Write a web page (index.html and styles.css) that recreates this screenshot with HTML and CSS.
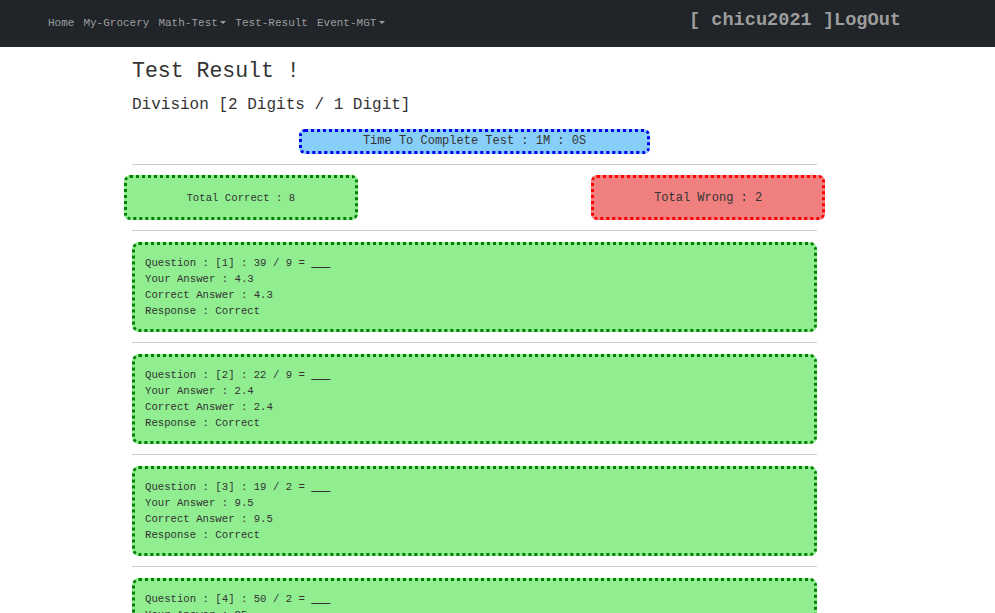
FILE: index.html
```html
<!DOCTYPE html>
<html>
<head>
<meta charset="utf-8">
<title>Test Result</title>
<link rel="stylesheet" href="styles.css">
</head>
<body>
<nav class="navbar">
  <ul class="nav-links">
    <li><a href="#">Home</a></li>
    <li><a href="#">My-Grocery</a></li>
    <li><a href="#" class="dropdown">Math-Test</a></li>
    <li><a href="#">Test-Result</a></li>
    <li><a href="#" class="dropdown">Event-MGT</a></li>
  </ul>
  <div class="user">[ chicu2021 ]<a href="#">LogOut</a></div>
</nav>

<main class="container">
  <h1 class="title">Test Result !</h1>
  <h2 class="subtitle">Division [2 Digits / 1 Digit]</h2>

  <div class="time-wrap">
    <div class="time-box">Time To Complete Test : 1M : 0S</div>
  </div>
  <hr class="sep">

  <div class="totals">
    <div class="total total-correct">Total Correct : 8</div>
    <div></div>
    <div class="total total-wrong">Total Wrong : 2</div>
  </div>
  <hr class="sep">

  <div class="card correct">
    <div>Question : [1] : 39 / 9 = <u>&nbsp;&nbsp;&nbsp;</u></div>
    <div>Your Answer : 4.3</div>
    <div>Correct Answer : 4.3</div>
    <div>Response : Correct</div>
  </div>
  <hr class="sep">

  <div class="card correct">
    <div>Question : [2] : 22 / 9 = <u>&nbsp;&nbsp;&nbsp;</u></div>
    <div>Your Answer : 2.4</div>
    <div>Correct Answer : 2.4</div>
    <div>Response : Correct</div>
  </div>
  <hr class="sep">

  <div class="card correct">
    <div>Question : [3] : 19 / 2 = <u>&nbsp;&nbsp;&nbsp;</u></div>
    <div>Your Answer : 9.5</div>
    <div>Correct Answer : 9.5</div>
    <div>Response : Correct</div>
  </div>
  <hr class="sep">

  <div class="card correct">
    <div>Question : [4] : 50 / 2 = <u>&nbsp;&nbsp;&nbsp;</u></div>
    <div>Your Answer : 25</div>
    <div>Correct Answer : 25</div>
    <div>Response : Correct</div>
  </div>
  <hr class="sep">
</main>
</body>
</html>
```

FILE: styles.css
```css
html, body {
  margin: 0;
  padding: 0;
  background: #ffffff;
}

body {
  font-family: "Liberation Mono", "Courier New", monospace;
  color: #212529;
}

.navbar {
  height: 47px;
  background: #212529;
  display: flex;
  align-items: center;
  padding: 0 94px 0 48px;
  box-sizing: border-box;
}

.nav-links {
  list-style: none;
  margin: -2px 0 0;
  padding: 0;
  display: flex;
  gap: 9px;
  font-size: 11px;
  line-height: 16px;
}

.nav-links a {
  color: #9b9d9f;
  text-decoration: none;
}

.dropdown::after {
  content: "";
  display: inline-block;
  margin-left: 2.5px;
  vertical-align: 2px;
  border-top: 3.3px solid #9b9d9f;
  border-left: 3.3px solid transparent;
  border-right: 3.3px solid transparent;
}

.user {
  margin-left: auto;
  font-size: 18.6px;
  font-weight: bold;
  color: #9d9d9d;
  line-height: 20px;
  margin-top: -6px;
}

.user a {
  color: #9d9d9d;
  text-decoration: none;
}

.container {
  margin-left: 132px;
  width: 685px;
}

.title {
  font-size: 21.5px;
  font-weight: normal;
  line-height: 24px;
  color: #333;
  margin: 12px 0 0;
}

.subtitle {
  font-size: 16px;
  font-weight: normal;
  line-height: 20px;
  color: #333;
  margin: 12px 0 0;
}

.time-wrap {
  display: flex;
  justify-content: center;
  margin-top: 14px;
}

.time-box {
  width: 351px;
  height: 25px;
  box-sizing: border-box;
  background: #87cefa;
  border: 3px dotted #0000ee;
  border-radius: 6px;
  font-size: 12px;
  line-height: 19px;
  text-align: center;
  color: #333;
}

.sep {
  border: 0;
  border-top: 1px solid #cccccc;
  margin: 10px 0 11px;
  height: 0;
}

.totals {
  display: grid;
  grid-template-columns: 1fr 1fr 1fr;
  margin: -1px -8px 0;
}

.total {
  height: 45px;
  box-sizing: border-box;
  border-radius: 6px;
  display: flex;
  align-items: center;
  justify-content: center;
  color: #333;
}

.total-correct {
  background: #90ee90;
  border: 3px dotted #008000;
  font-size: 10.67px;
}

.total-wrong {
  background: #f08080;
  border: 3px dotted #ff0000;
  font-size: 12px;
}

.card {
  box-sizing: border-box;
  height: 90px;
  border-radius: 7px;
  padding: 10px 10px 9px;
  font-size: 10.67px;
  line-height: 16px;
  color: #333;
}

.card.correct {
  background: #90ee90;
  border: 3px dotted #008000;
}

.card u {
  text-decoration: underline;
}
```
